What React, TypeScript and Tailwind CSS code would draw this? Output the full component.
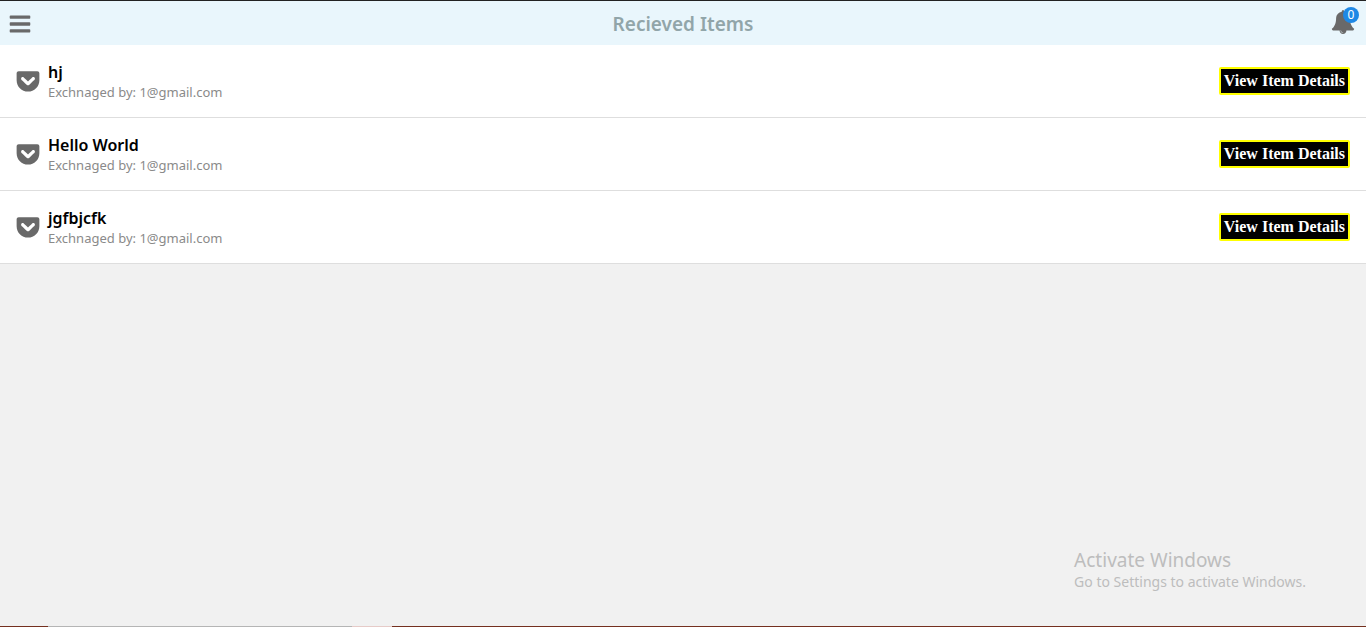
import { FaGetPocket } from "react-icons/fa";

type Item = { name: string; sender: string };

const items: Item[] = [
  { name: "hj", sender: "1@gmail.com" },
  { name: "Hello World", sender: "1@gmail.com" },
  { name: "jgfbjcfk", sender: "1@gmail.com" },
];

function MenuIcon() {
  return (
    <svg viewBox="0 0 1792 1792" className="size-6" fill="currentColor" aria-hidden="true">
      <path d="M1664 1344v128q0 26-19 45t-45 19h-1408q-26 0-45-19t-19-45v-128q0-26 19-45t45-19h1408q26 0 45 19t19 45zm0-512v128q0 26-19 45t-45 19h-1408q-26 0-45-19t-19-45v-128q0-26 19-45t45-19h1408q26 0 45 19t19 45zm0-512v128q0 26-19 45t-45 19h-1408q-26 0-45-19t-19-45v-128q0-26 19-45t45-19h1408q26 0 45 19t19 45z" />
    </svg>
  );
}

function BellIcon() {
  return (
    <svg viewBox="0 0 1792 1792" className="size-6" fill="currentColor" aria-hidden="true">
      <path d="M912 1696q0-16-16-16-59 0-101.500-42.500t-42.500-101.500q0-16-16-16t-16 16q0 73 51.500 124.500t124.500 51.500q16 0 16-16zm816-288q0 52-38 90t-90 38h-448q0 106-75 181t-181 75-181-75-75-181h-448q-52 0-90-38t-38-90q50-42 91-88t85-119.500 74.500-158.500 50-206 19.500-260q0-152 117-282.500t307-158.500q-8-19-8-39 0-40 28-68t68-28 68 28 28 68q0 20-8 39 190 28 307 158.500t117 282.500q0 139 19.500 260t50 206 74.500 158.500 85 119.500 91 88z" />
    </svg>
  );
}

function Header() {
  return (
    <header className="flex h-[45px] items-center justify-between border-t border-[#222222] bg-[#e9f6fc] px-2 pt-0.5 text-[#696969]">
      <button type="button" aria-label="Menu" className="flex w-8">
        <MenuIcon />
      </button>
      <h1 className="text-[19px] leading-6 font-semibold text-[#91a5a9]">Recieved Items</h1>
      <button type="button" aria-label="Notifications" className="relative flex w-8 justify-end pr-[3px] pb-1">
        <BellIcon />
        <span className="absolute -top-[3px] -right-px flex size-4 items-center justify-center rounded-full bg-[#1e88e5] text-xs leading-4 text-white">
          0
        </span>
      </button>
    </header>
  );
}

function ItemRow({ item }: { item: Item }) {
  return (
    <li className="flex h-[73px] items-center justify-between border-b border-[#dedede] bg-white px-4">
      <div className="flex items-center gap-2">
        <FaGetPocket className="h-[26px] w-6 text-[#696969]" aria-hidden="true" />
        <div className="pt-0.5">
          <h2 className="text-base leading-5 font-semibold text-black">{item.name}</h2>
          <p className="text-[13px] leading-5 text-[#8a8a8a]">Exchnaged by: {item.sender}</p>
        </div>
      </div>
      <button
        type="button"
        className="h-7 rounded-xs border-2 border-[#ffff00] bg-black px-[3px] font-['Liberation_Serif','Times_New_Roman',serif] text-base leading-6 font-bold text-white"
      >
        View Item Details
      </button>
    </li>
  );
}

export default function App() {
  return (
    <div className="flex min-h-screen flex-col bg-[#f1f1f1] font-['Segoe_UI','Noto_Sans',sans-serif]">
      <Header />
      <main className="grow">
        <ul>
          {items.map((item) => (
            <ItemRow key={item.name} item={item} />
          ))}
        </ul>
      </main>
      <aside className="mr-15 mb-[34px] self-end text-[#bdbdbd]">
        <p className="text-[19px] leading-6">Activate Windows</p>
        <p className="text-sm leading-5">Go to Settings to activate Windows.</p>
      </aside>
      <div className="flex h-px bg-[#74301f]" aria-hidden="true">
        <div className="ml-12 w-76 bg-[#b5b5b5]" />
        <div className="w-10 bg-[#e6cbc8]" />
      </div>
    </div>
  );
}
